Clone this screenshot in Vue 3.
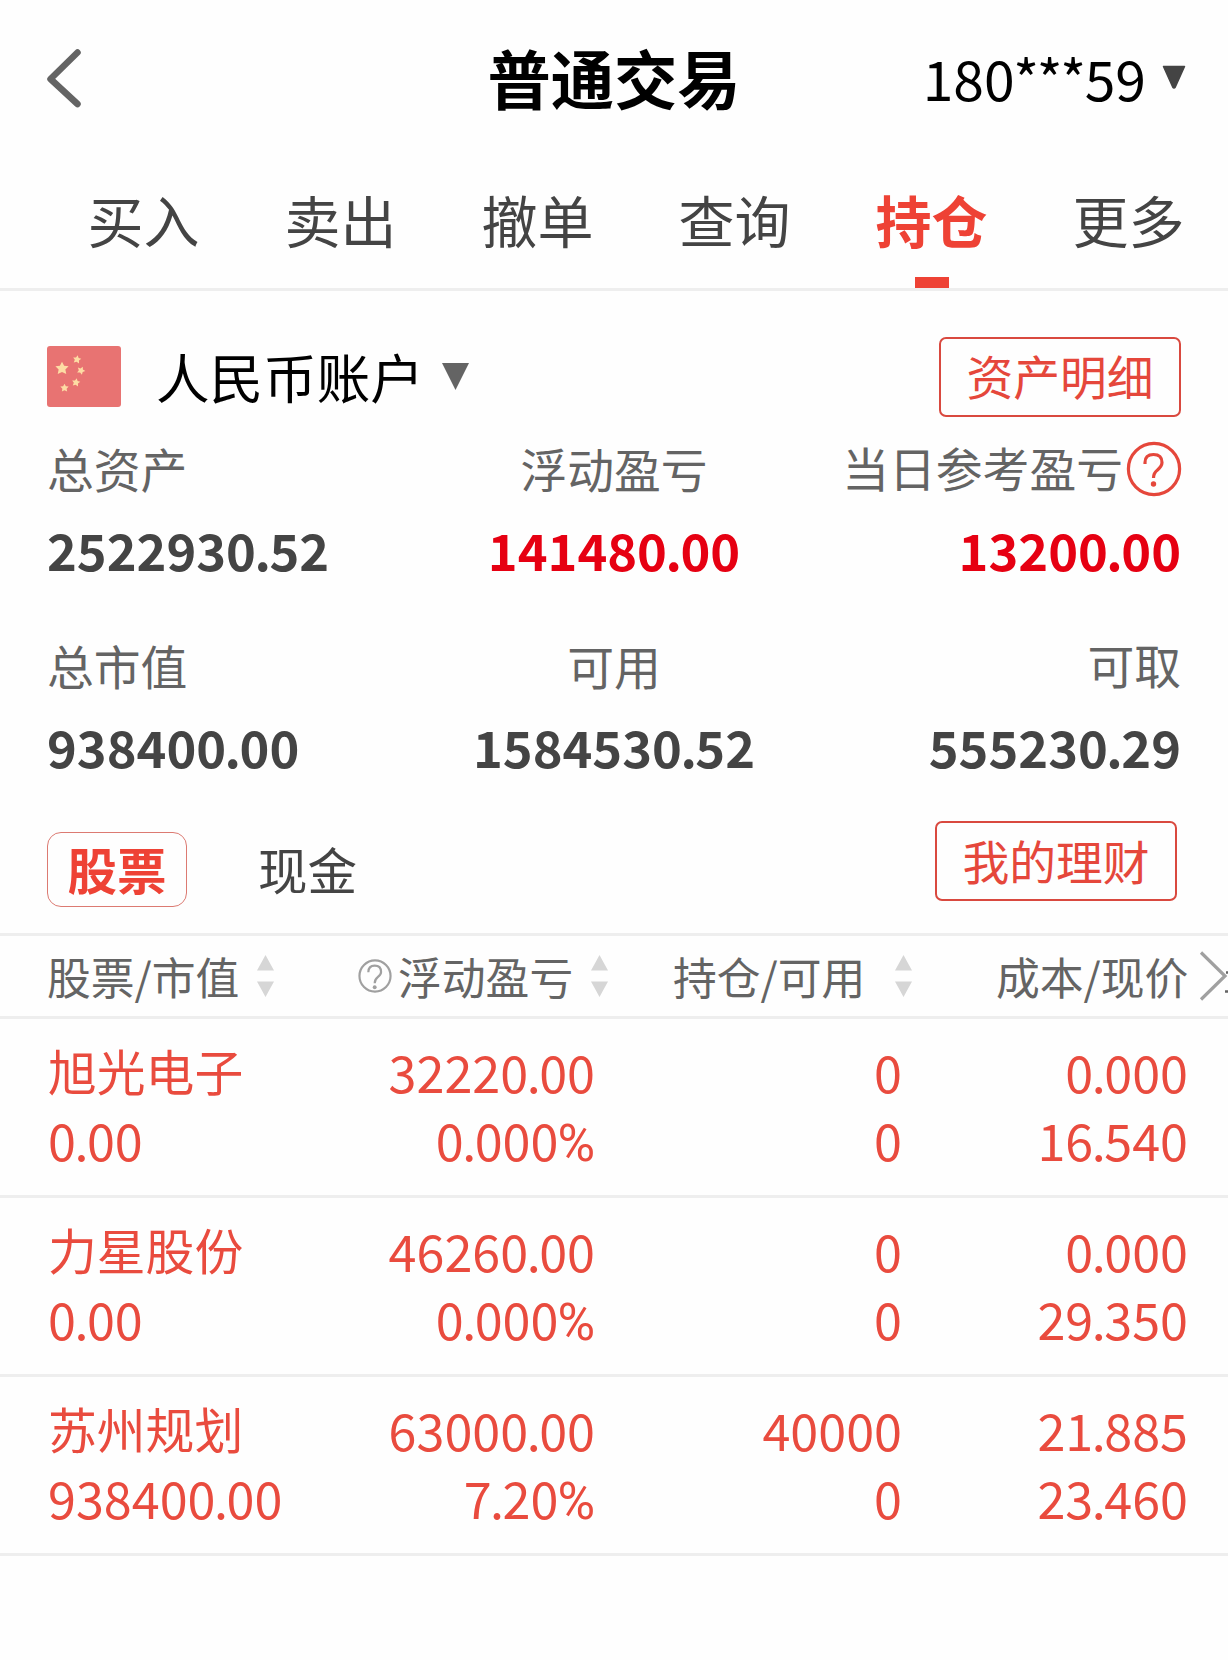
<!-- App.vue -->
<script setup>
import { ref, h } from 'vue'

const tabs = ['买入', '卖出', '撤单', '查询', '持仓', '更多']
const activeTab = ref('持仓')

const summary = [
    [
        { label: '总资产', value: '2522930.52' },
        { label: '浮动盈亏', value: '141480.00', up: true },
        { label: '当日参考盈亏', value: '13200.00', up: true, help: true }
    ],
    [
        { label: '总市值', value: '938400.00' },
        { label: '可用', value: '1584530.52' },
        { label: '可取', value: '555230.29' }
    ]
]

const columns = [
    { title: '股票/市值', sort: true },
    { title: '浮动盈亏', sort: true, help: true },
    { title: '持仓/可用', sort: true },
    { title: '成本/现价' }
]

const holdings = [
    { name: '旭光电子', cells: [['0.00'], ['32220.00', '0.000%'], ['0', '0'], ['0.000', '16.540']] },
    { name: '力星股份', cells: [['0.00'], ['46260.00', '0.000%'], ['0', '0'], ['0.000', '29.350']] },
    { name: '苏州规划', cells: [['938400.00'], ['63000.00', '7.20%'], ['40000', '0'], ['21.885', '23.460']] }
]

// punctuation is set tighter than the digits
const marks = { '.': 'dot', '%': 'percent', '*': 'star' }
const Num = (props) =>
    h('span', { class: 'num' }, props.text.split(/([.%*])/).filter(Boolean).map((part) =>
        marks[part] ? h('span', { class: marks[part] }, part) : part
    ))
Num.props = ['text']
</script>

<template>
    <div class="page">
        <header class="header">
            <svg class="back" viewBox="0 0 36 60">
                <path d="M31.5 4.5 L4.5 31 L31.5 56" />
            </svg>
            <h1 class="title">普通交易</h1>
            <div class="account">
                <Num text="180***59" />
                <svg class="caret" viewBox="0 0 24 24">
                    <path d="M1.5 1.5 H22.5 L13.3 22 Q12 24 10.7 22 Z" />
                </svg>
            </div>
        </header>

        <nav class="tabs">
            <span
                v-for="tab in tabs"
                :key="tab"
                class="tab"
                :class="{ active: tab === activeTab }"
                @click="activeTab = tab"
            >{{ tab }}</span>
        </nav>

        <section class="currency">
            <svg class="flag" viewBox="0 0 74 61">
                <defs>
                    <path id="star" d="M0 -6 L1.9 -2.4 L5.9 -2 L3 .9 L3.8 5 L0 3.1 L-3.8 5 L-3 .9 L-5.9 -2 L-1.9 -2.4 Z" />
                </defs>
                <rect width="74" height="61" rx="3" fill="#e87372" />
                <g fill="#fddca4">
                    <use href="#star" transform="translate(15 22.5) scale(1.12)" />
                    <use href="#star" transform="translate(30 13.5) rotate(10) scale(.7)" />
                    <use href="#star" transform="translate(34 24.5) rotate(25) scale(.7)" />
                    <use href="#star" transform="translate(29 36.5) rotate(10) scale(.7)" />
                    <use href="#star" transform="translate(17.5 42) scale(.7)" />
                </g>
            </svg>
            <span class="currency-name">人民币账户</span>
            <svg class="currency-caret" viewBox="0 0 27 27">
                <path d="M0 0 H27 L13.5 27 Z" />
            </svg>
            <button class="outline-btn">资产明细</button>
        </section>

        <section v-for="(group, i) in summary" :key="i" class="summary">
            <div v-for="item in group" :key="item.label" class="item">
                <div class="label">
                    <span>{{ item.label }}</span>
                    <svg v-if="item.help" class="help" viewBox="0 0 56 56">
                        <circle cx="28" cy="28" r="25.6" />
                        <path d="M19 23 V21.5 Q19 13.5 27.5 13.5 Q36 13.5 36 21.5 Q36 25 31.5 29 Q27.5 32 27.5 37" />
                        <circle class="point" cx="27.5" cy="43" r="2.7" />
                    </svg>
                </div>
                <div class="value" :class="{ up: item.up }"><Num :text="item.value" /></div>
            </div>
        </section>

        <section class="types">
            <span class="chip">股票</span>
            <span class="type">现金</span>
            <button class="outline-btn wealth">我的理财</button>
        </section>

        <div class="table-head">
            <div v-for="col in columns" :key="col.title" class="th">
                <svg v-if="col.help" class="th-help" viewBox="0 0 56 56">
                    <circle cx="28" cy="28" r="25.6" />
                    <path d="M17 22 Q17 11 27.5 11 Q38 11 38 21.5 Q38 25.5 32.5 30 Q27.5 34 27.5 40" />
                    <circle class="point" cx="27.5" cy="46.5" r="3.2" />
                </svg>
                <span>{{ col.title }}</span>
                <svg v-if="col.sort" class="sort" viewBox="0 0 17 42">
                    <path d="M8.5 0 L17 15.5 H0 Z M8.5 42 L0 26.5 H17 Z" />
                </svg>
            </div>
            <svg class="more" viewBox="0 0 29 50">
                <path d="M2 1.5 L26 25 L2 48.5" />
                <path class="edge" d="M27 21.5 H29 M26 40.5 H29" />
            </svg>
        </div>

        <div v-for="row in holdings" :key="row.name" class="row">
            <div v-for="(cell, i) in row.cells" :key="i" class="cell">
                <span v-if="i === 0" class="name">{{ row.name }}</span>
                <Num v-for="(text, j) in cell" :key="j" :text="text" />
            </div>
        </div>
    </div>
</template>

<style>
body {
    background: #fefefe;
}

.num .dot {
    margin: 0 -1.5px;
}

.num .star {
    margin: 0 -1.2px;
}

.num .percent {
    margin-left: -1px;
    font-family: Roboto, sans-serif;
    font-size: 1.02em;
    line-height: 1;
}
</style>

<style scoped>
.page {
    width: 1228px;
    height: 1660px;
    overflow: hidden;
    font-family: "Noto Sans CJK SC", sans-serif;
    color: #444;
    background: #fefefe;
}

.header {
    display: grid;
    grid-template-columns: 1fr auto 1fr;
    align-items: center;
    height: 150px;
    padding: 0 42px 0 46px;
    box-sizing: border-box;
    color: #000;
}

.back {
    width: 36px;
    height: 60px;
    margin-top: 6px;
    fill: none;
    stroke: #646464;
    stroke-width: 6.5;
    stroke-linecap: round;
    stroke-linejoin: round;
}

.title {
    margin: 3px 4px 0 0;
    font-size: 63.3px;
    line-height: 90px;
    font-weight: 700;
}

.account {
    display: flex;
    align-items: center;
    justify-content: flex-end;
    gap: 16px;
    margin-top: 4px;
    font-size: 55.2px;
    line-height: 90px;
}

.caret {
    width: 24px;
    height: 24px;
    margin-top: -1px;
    fill: #444;
    stroke: #444;
    stroke-width: 1.5;
    stroke-linejoin: round;
}

.tabs {
    display: grid;
    grid-template-columns: repeat(6, 1fr);
    height: 138px;
    padding: 0 1px 0 45px;
    border-bottom: 3px solid #eee;
}

.tab {
    display: flex;
    flex-direction: column;
    align-items: center;
    justify-content: space-between;
    font-size: 56px;
    line-height: 138px;
    height: 138px;
}

.tab.active {
    color: #ee4235;
    font-weight: 700;
}

.tab.active::after {
    content: "";
    width: 34px;
    height: 11px;
    margin-top: -11px;
    background: #ee4235;
}

.currency {
    display: flex;
    align-items: center;
    height: 146px;
    padding: 25px 47px 0;
    box-sizing: border-box;
}

.flag {
    width: 74px;
    height: 61px;
}

.currency-name {
    margin: -2px 0 0 35px;
    font-size: 53.6px;
    line-height: 80px;
    color: #000;
}

.currency-caret {
    width: 27px;
    height: 27px;
    margin-left: 18px;
    fill: #646464;
}

.outline-btn {
    width: 242px;
    height: 80px;
    margin-left: auto;
    padding: 0 0 3px;
    border: 2px solid #d9493f;
    border-radius: 7px;
    background: none;
    font-family: inherit;
    font-size: 46.8px;
    line-height: 70px;
    color: #e5473b;
}

.summary {
    display: grid;
    grid-template-columns: 1fr auto 1fr;
    padding: 0 47px;
}

.summary + .summary {
    margin-top: 35px;
}

.item {
    text-align: center;
}

.item:first-child {
    text-align: left;
}

.item:last-child {
    text-align: right;
}

.label {
    height: 60px;
    font-size: 46.8px;
    line-height: 62px;
    color: #646464;
}

.item:last-child .label {
    display: flex;
    align-items: center;
    justify-content: flex-end;
    gap: 3px;
}

.help {
    width: 56px;
    height: 56px;
    margin-right: -1px;
    margin-top: 3px;
    fill: none;
    stroke: #e5473b;
    stroke-width: 3.2;
}

.point {
    stroke: none;
}

.help .point {
    fill: #e5473b;
}

.value {
    height: 102px;
    font-size: 50.6px;
    line-height: 105px;
    font-weight: 700;
}

.value.up {
    color: #e60012;
}

.types {
    display: flex;
    align-items: center;
    height: 137px;
    padding: 10px 51px 0 47px;
    box-sizing: border-box;
    font-size: 49.5px;
}

.chip {
    width: 140px;
    height: 75px;
    box-sizing: border-box;
    border: 1.5px solid #dc7a72;
    border-radius: 14px;
    text-align: center;
    line-height: 72px;
    font-weight: 700;
    color: #ee4235;
}

.type {
    margin-left: 71px;
    line-height: 69px;
    margin-top: -2px;
}

.wealth {
    margin-bottom: 17px;
}

.table-head {
    display: grid;
    grid-template-columns: 311px 315px 323px 203px 29px;
    align-items: center;
    height: 80px;
    padding-left: 47px;
    border-top: 3px solid #eee;
    border-bottom: 3px solid #eee;
    font-size: 43.8px;
    line-height: 74px;
    color: #646464;
}

.th {
    display: flex;
    align-items: center;
    white-space: nowrap;
}

.th span {
    margin-top: -1px;
}

.th-help {
    width: 34px;
    height: 34px;
    margin-right: 6px;
    fill: none;
    stroke: #a0a0a0;
    stroke-width: 3.6;
}

.th-help .point {
    fill: #a0a0a0;
}

.sort {
    width: 17px;
    height: 42px;
    margin-left: 18px;
    fill: #d6d6d6;
}

.th:nth-child(3) .sort {
    margin-left: 30px;
}

.more {
    width: 29px;
    height: 50px;
    fill: none;
    stroke: #a0a0a0;
    stroke-width: 3.2;
}

.more .edge {
    stroke: #646464;
    stroke-width: 2.5;
}

.row {
    display: grid;
    grid-template-columns: 300px 247px 307px 286px;
    height: 176px;
    padding-left: 48px;
    border-bottom: 3px solid #eee;
    color: #e94b3e;
    font-size: 50.3px;
    line-height: 68px;
}

.cell {
    display: flex;
    flex-direction: column;
    align-items: flex-end;
    padding-top: 18px;
}

.cell:first-child {
    align-items: flex-start;
}

.cell > span {
    height: 68px;
}

.name {
    font-size: 48.8px;
    line-height: 66px;
}
</style>
